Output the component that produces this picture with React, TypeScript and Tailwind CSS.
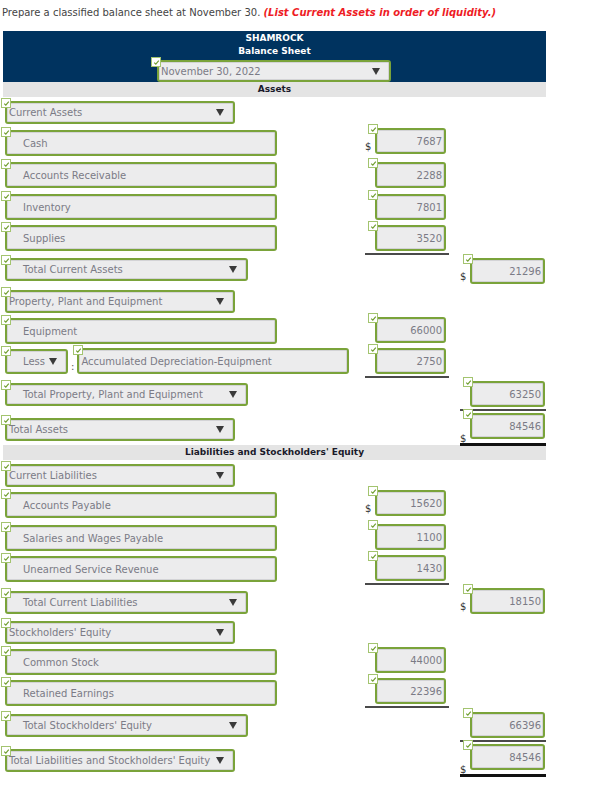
import type { ReactNode } from "react";

type Row = {
  h: string;
  lmt?: string;
  label: ReactNode;
  col?: 1 | 2;
  amt?: string;
  dollar?: boolean;
  line?: "thin" | "thick";
};

function Check({ pos = "-left-[9px] -top-[6px]" }: { pos?: string }) {
  return (
    <span
      className={`absolute ${pos} z-10 flex h-[10px] w-[10px] items-center justify-center border border-[#a3c46f] bg-white`}
    >
      <svg viewBox="0 0 8 8" className="h-[7px] w-[7px]">
        <path d="M1.4 4.2 L3.2 5.9 L6.6 1.9" fill="none" stroke="#6f9d2e" strokeWidth="1.3" />
      </svg>
    </span>
  );
}

function Arrow() {
  return (
    <svg viewBox="0 0 8 7" className="h-[7px] w-[8px] shrink-0">
      <path d="M0 0 H8 L4 7 Z" fill="#3a3a3a" />
    </svg>
  );
}

const box =
  "relative rounded-[3px] border-2 border-[#7aa33a] bg-[#ececed] shadow-[inset_0_0_0_1px_#d3d3d6]";

function Select({ text, w, indent }: { text: string; w: string; indent?: boolean }) {
  return (
    <div className={`${box} ${w} flex h-[23px] items-center justify-between ${indent ? "pl-[16px]" : "pl-[2px]"} pr-[9px]`}>
      <Check pos="-left-[6px] -top-[5px]" />
      <span className="whitespace-nowrap text-[#7b7b86]">{text}</span>
      <Arrow />
    </div>
  );
}

function Input({ text, w = "w-[272px]", pl = "pl-[16px]" }: { text: string; w?: string; pl?: string }) {
  return (
    <div className={`${box} ${w} flex h-[26px] items-center ${pl}`}>
      <Check pos="-left-[6px] -top-[5px]" />
      <span className="whitespace-nowrap text-[#7b7b86]">{text}</span>
    </div>
  );
}

function Amount({ r }: { r: Row }) {
  return (
    <div className="relative">
      {r.dollar && (
        <span className="absolute bottom-[2px] left-[0px] text-[10px] leading-none text-[#333]">$</span>
      )}
      <div
        className={`${box} ml-[10px] flex h-[26px] ${r.col === 1 ? "w-[71px]" : "w-[75px]"} items-center justify-end pr-[2px] text-[#7b7b86]`}
      >
        <Check />
        {r.amt}
      </div>
      {r.line === "thin" && <div className="mt-[2px] h-[2px] bg-[#4a4a4a]" />}
      {r.line === "thick" && <div className="mt-[4px] h-[3px] bg-[#111]" />}
    </div>
  );
}

const rows1: Row[] = [
  { h: "h-[27px]", label: <Select text="Current Assets" w="w-[230px]" /> },
  { h: "h-[34px]", lmt: "pt-[2px]", label: <Input text="Cash" />, col: 1, amt: "7687", dollar: true },
  { h: "h-[32px]", label: <Input text="Accounts Receivable" />, col: 1, amt: "2288" },
  { h: "h-[31px]", label: <Input text="Inventory" />, col: 1, amt: "7801" },
  { h: "h-[33px]", label: <Input text="Supplies" />, col: 1, amt: "3520", line: "thin" },
  { h: "h-[32px]", label: <Select text="Total Current Assets" w="w-[243px]" indent />, col: 2, amt: "21296", dollar: true },
  { h: "h-[27px]", label: <Select text="Property, Plant and Equipment" w="w-[230px]" /> },
  { h: "h-[31px]", lmt: "pt-[1px]", label: <Input text="Equipment" />, col: 1, amt: "66000" },
  {
    h: "h-[33px]",
    label: (
      <div className="flex items-end">
        <Select text="Less" w="w-[63px] h-[25px]" indent />
        <span className="mx-[3px] text-[#555]">:</span>
        <Input text="Accumulated Depreciation-Equipment" w="w-[272px]" pl="pl-[2px]" />
      </div>
    ),
    col: 1,
    amt: "2750",
    line: "thin",
  },
  { h: "h-[32px]", lmt: "pt-[2px]", label: <Select text="Total Property, Plant and Equipment" w="w-[243px]" indent />, col: 2, amt: "63250", line: "thin" },
  { h: "h-[32px]", lmt: "pt-[5px]", label: <Select text="Total Assets" w="w-[230px]" />, col: 2, amt: "84546", dollar: true, line: "thick" },
];

const rows2: Row[] = [
  { h: "h-[26px]", label: <Select text="Current Liabilities" w="w-[230px]" /> },
  { h: "h-[34px]", lmt: "pt-[2px]", label: <Input text="Accounts Payable" />, col: 1, amt: "15620", dollar: true },
  { h: "h-[31px]", lmt: "pt-[1px]", label: <Input text="Salaries and Wages Payable" />, col: 1, amt: "1100" },
  { h: "h-[33px]", lmt: "pt-[1px]", label: <Input text="Unearned Service Revenue" />, col: 1, amt: "1430", line: "thin" },
  { h: "h-[33px]", lmt: "pt-[3px]", label: <Select text="Total Current Liabilities" w="w-[243px]" indent />, col: 2, amt: "18150", dollar: true },
  { h: "h-[26px]", label: <Select text="Stockholders' Equity" w="w-[230px]" /> },
  { h: "h-[31px]", lmt: "pt-[2px]", label: <Input text="Common Stock" />, col: 1, amt: "44000" },
  { h: "h-[34px]", lmt: "pt-[2px]", label: <Input text="Retained Earnings" />, col: 1, amt: "22396", line: "thin" },
  { h: "h-[32px]", lmt: "pt-[2px]", label: <Select text="Total Stockholders' Equity" w="w-[243px]" indent />, col: 2, amt: "66396", line: "thin" },
  { h: "h-[36px]", lmt: "pt-[5px]", label: <Select text="Total Liabilities and Stockholders' Equity" w="w-[230px]" />, col: 2, amt: "84546", dollar: true, line: "thick" },
];

function Rows({ rows }: { rows: Row[] }) {
  return (
    <>
      {rows.map((r, i) => (
        <div key={i} className={`flex ${r.h}`}>
          <div className={`w-[365px] shrink-0 pl-[5px] ${r.lmt ?? ""}`}>{r.label}</div>
          <div className="w-[84px] shrink-0">{r.col === 1 && <Amount r={r} />}</div>
          <div className="ml-[11px] w-[86px] shrink-0">{r.col === 2 && <Amount r={r} />}</div>
        </div>
      ))}
    </>
  );
}

function Bar({ children }: { children: ReactNode }) {
  return (
    <div className="ml-[3px] flex h-[15px] w-[543px] items-center justify-center bg-[#e4e4e4] text-[9px] font-bold text-[#1a1a2a]">
      {children}
    </div>
  );
}

export default function App() {
  return (
    <div className="min-h-screen w-[594px] bg-white font-['DejaVu_Sans',sans-serif] text-[10px] text-[#333]">
      <div className="pl-[2px] pt-[7px] text-[10px] leading-[12px] text-[#444]">
        Prepare a classified balance sheet at November 30.{" "}
        <span className="font-bold italic text-[#ee1c25]">(List Current Assets in order of liquidity.)</span>
      </div>

      {/* Header */}
      <div className="ml-[3px] mt-[12px] h-[51px] w-[543px] bg-[#00335f] pt-[1px]">
        <div className="text-center text-[9px] font-bold leading-[13px] text-white">SHAMROCK</div>
        <div className="text-center text-[9px] font-bold leading-[13px] text-white">Balance Sheet</div>
        <div className={`${box} ml-[154px] mt-[2px] flex h-[22px] w-[234px] items-center justify-between pl-[2px] pr-[9px]`}>
          <Check pos="-left-[8px] -top-[5px]" />
          <span className="text-[#7b7b86]">November 30, 2022</span>
          <Arrow />
        </div>
      </div>
      <Bar>Assets</Bar>

      <div className="pt-[4px]">
        <Rows rows={rows1} />
      </div>
      <Bar>Liabilities and Stockholders' Equity</Bar>
      <div className="pt-[4px]">
        <Rows rows={rows2} />
      </div>
    </div>
  );
}
